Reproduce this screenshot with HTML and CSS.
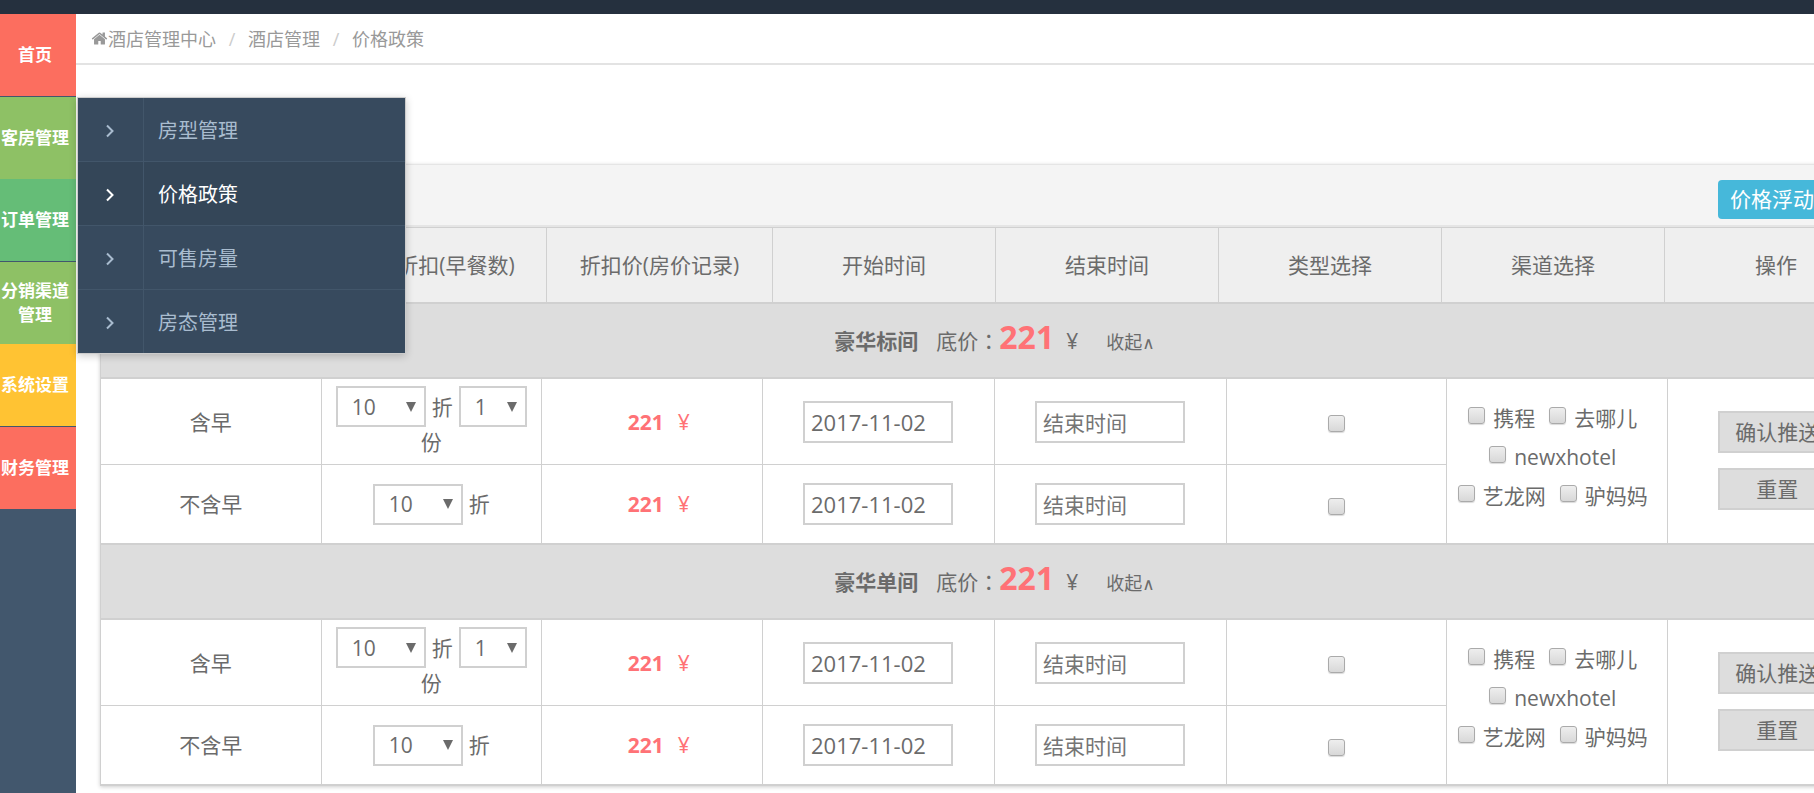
FILE: index.html
```html
<!DOCTYPE html>
<html lang="zh">
<head>
    <meta charset="UTF-8">
    <meta name="viewport" content="width=device-width, initial-scale=1.0">
    <title>价格政策</title>
    <link rel="stylesheet" href="styles.css">
</head>
<body>
    <div class="topbar"></div>
    <div class="layout">
        <!-- 左侧导航 -->
        <nav class="sidebar">
            <ul class="menu">
                <li class="menu-item red"><a href="#">首页</a></li>
                <li class="menu-item green">
                    <a href="#">客房管理</a>
                    <!-- 二级菜单 -->
                    <ul class="submenu">
                        <li><a href="#"><span class="arrow"><svg width="8" height="14" viewBox="0 0 8 14"><path d="M1 1.5l5.5 5.5L1 12.5"/></svg></span><span class="label">房型管理</span></a></li>
                        <li class="active"><a href="#"><span class="arrow"><svg width="8" height="14" viewBox="0 0 8 14"><path d="M1 1.5l5.5 5.5L1 12.5"/></svg></span><span class="label">价格政策</span></a></li>
                        <li><a href="#"><span class="arrow"><svg width="8" height="14" viewBox="0 0 8 14"><path d="M1 1.5l5.5 5.5L1 12.5"/></svg></span><span class="label">可售房量</span></a></li>
                        <li><a href="#"><span class="arrow"><svg width="8" height="14" viewBox="0 0 8 14"><path d="M1 1.5l5.5 5.5L1 12.5"/></svg></span><span class="label">房态管理</span></a></li>
                    </ul>
                </li>
                <li class="menu-item teal"><a href="#">订单管理</a></li>
                <li class="menu-item green"><a href="#">分销渠道管理</a></li>
                <li class="menu-item yellow"><a href="#">系统设置</a></li>
                <li class="menu-item red"><a href="#">财务管理</a></li>
            </ul>
        </nav>

        <main class="main">
            <!-- 面包屑 -->
            <div class="breadcrumb">
                <svg class="home" width="17" height="17" viewBox="0 0 1792 1792"><path d="M1472 992v480q0 26-19 45t-45 19h-384v-384h-256v384h-384q-26 0-45-19t-19-45v-480q0-1 .5-3t.5-3l575-474 575 474q1 2 1 6zm223-69l-62 74q-8 9-21 11h-3q-13 0-21-7l-692-577-692 577q-12 8-24 7-13-2-21-11l-62-74q-8-10-7-23.5t11-21.5l719-599q32-26 76-26t76 26l244 204v-195q0-14 9-23t23-9h192q14 0 23 9t9 23v408l219 182q10 8 11 21.5t-7 23.5z"/></svg>
                <a href="#">酒店管理中心</a>
                <span class="sep">/</span>
                <a href="#">酒店管理</a>
                <span class="sep">/</span>
                <a href="#">价格政策</a>
            </div>

            <div class="panel">
                <div class="toolbar">
                    <button type="button" class="btn-info">价格浮动</button>
                </div>

                <table class="head-table">
                    <thead>
                        <tr>
                            <th></th>
                            <th>价格折扣(早餐数)</th>
                            <th class="wide">折扣价(房价记录)</th>
                            <th>开始时间</th>
                            <th>结束时间</th>
                            <th>类型选择</th>
                            <th>渠道选择</th>
                            <th>操作</th>
                        </tr>
                    </thead>
                </table>

                <table class="price-table">
                    <colgroup>
                        <col>
                        <col>
                        <col>
                        <col class="col-date">
                        <col class="col-date">
                        <col>
                        <col>
                        <col>
                    </colgroup>
                    <tbody>
                        <tr class="group">
                            <th colspan="8"><div class="group-title"><b>豪华标间</b><span class="base" lang="zh-Hant">底价：</span><strong>221</strong><span class="yen">¥</span><a href="#">收起<i>∧</i></a></div></th>
                        </tr>
                        <tr class="row-first">
                            <td>含早</td>
                            <td>
                                <div class="discount">
                                    <select aria-label="折扣"><option>10</option></select>
                                    <span>折</span>
                                    <select class="small" aria-label="早餐份数"><option>1</option></select>
                                    <span>份</span>
                                </div>
                            </td>
                            <td class="price"><b>221</b>¥</td>
                            <td><input type="text" class="date" aria-label="开始时间" value="2017-11-02"></td>
                            <td><input type="text" class="date" aria-label="结束时间" placeholder="结束时间"></td>
                            <td><input type="checkbox" aria-label="类型选择"></td>
                            <td rowspan="2" class="last">
                                <div class="channels">
                                    <label><input type="checkbox">携程</label>
                                    <label><input type="checkbox">去哪儿</label>
                                    <label><input type="checkbox">newxhotel</label>
                                    <label><input type="checkbox">艺龙网</label>
                                    <label><input type="checkbox">驴妈妈</label>
                                </div>
                            </td>
                            <td rowspan="2" class="last">
                                <div class="actions">
                                    <button type="button">确认推送</button>
                                    <button type="button">重置</button>
                                </div>
                            </td>
                        </tr>
                        <tr class="row-last">
                            <td>不含早</td>
                            <td>
                                <div class="discount">
                                    <select aria-label="折扣"><option>10</option></select>
                                    <span>折</span>
                                </div>
                            </td>
                            <td class="price"><b>221</b>¥</td>
                            <td><input type="text" class="date" aria-label="开始时间" value="2017-11-02"></td>
                            <td><input type="text" class="date" aria-label="结束时间" placeholder="结束时间"></td>
                            <td><input type="checkbox" aria-label="类型选择"></td>
                        </tr>
                    </tbody>
                    <tbody>
                        <tr class="group">
                            <th colspan="8"><div class="group-title"><b>豪华单间</b><span class="base" lang="zh-Hant">底价：</span><strong>221</strong><span class="yen">¥</span><a href="#">收起<i>∧</i></a></div></th>
                        </tr>
                        <tr class="row-first">
                            <td>含早</td>
                            <td>
                                <div class="discount">
                                    <select aria-label="折扣"><option>10</option></select>
                                    <span>折</span>
                                    <select class="small" aria-label="早餐份数"><option>1</option></select>
                                    <span>份</span>
                                </div>
                            </td>
                            <td class="price"><b>221</b>¥</td>
                            <td><input type="text" class="date" aria-label="开始时间" value="2017-11-02"></td>
                            <td><input type="text" class="date" aria-label="结束时间" placeholder="结束时间"></td>
                            <td><input type="checkbox" aria-label="类型选择"></td>
                            <td rowspan="2" class="last">
                                <div class="channels">
                                    <label><input type="checkbox">携程</label>
                                    <label><input type="checkbox">去哪儿</label>
                                    <label><input type="checkbox">newxhotel</label>
                                    <label><input type="checkbox">艺龙网</label>
                                    <label><input type="checkbox">驴妈妈</label>
                                </div>
                            </td>
                            <td rowspan="2" class="last">
                                <div class="actions">
                                    <button type="button">确认推送</button>
                                    <button type="button">重置</button>
                                </div>
                            </td>
                        </tr>
                        <tr class="row-last">
                            <td>不含早</td>
                            <td>
                                <div class="discount">
                                    <select aria-label="折扣"><option>10</option></select>
                                    <span>折</span>
                                </div>
                            </td>
                            <td class="price"><b>221</b>¥</td>
                            <td><input type="text" class="date" aria-label="开始时间" value="2017-11-02"></td>
                            <td><input type="text" class="date" aria-label="结束时间" placeholder="结束时间"></td>
                            <td><input type="checkbox" aria-label="类型选择"></td>
                        </tr>
                    </tbody>
                </table>
            </div>
        </main>
    </div>
</body>
</html>
```

FILE: styles.css
```css
* {
    box-sizing: border-box;
}
body {
    margin: 0;
    font-family: "Open Sans", "Noto Sans CJK SC", sans-serif;
    font-size: 21px;
    line-height: 30px;
    color: #6b6b6b;
    background-color: #fff;
    overflow-x: hidden;
}
a {
    color: inherit;
    text-decoration: none;
}
ul {
    list-style: none;
    margin: 0;
    padding: 0;
}
button, input, select {
    font: inherit;
    color: inherit;
    margin: 0;
}
.topbar {
    height: 14px;
    background-color: #25303e;
}
.layout {
    display: flex;
    min-height: calc(100vh - 14px);
}

/* 左侧导航 */
.sidebar {
    flex: none;
    width: 76px;
    background-color: #42576d;
}
.menu-item {
    position: relative;
}
.menu-item:nth-child(odd) {
    border-bottom: 1px solid #42576d;
}
.menu-item > a {
    display: flex;
    align-items: center;
    justify-content: center;
    height: 82px;
    padding-right: 6px;
    font-size: 17px;
    font-weight: bold;
    line-height: 24px;
    text-align: center;
    color: #fff;
}
.red {
    background-color: #fc6e5f;
}
.green {
    background-color: #8ec165;
}
.teal {
    background-color: #65bd77;
}
.yellow {
    background-color: #ffc333;
}

/* 二级菜单 */
.submenu {
    position: absolute;
    top: 0;
    left: 77px;
    z-index: 10;
    width: 329px;
    border: 1px solid #ccc;
    background-color: #374a5e;
    box-shadow: 0 2px 8px rgba(0, 0, 0, 0.2);
}
.submenu a {
    display: flex;
    height: 63px;
    font-size: 20px;
    color: #a9bccf;
}
.submenu li + li {
    border-top: 1px solid #42566a;
}
.submenu .arrow {
    display: flex;
    align-items: center;
    justify-content: center;
    width: 66px;
    padding: 2px 2px 0 0;
    border-right: 1px solid #42566a;
}
.submenu .label {
    display: flex;
    align-items: center;
    padding: 2px 0 0 14px;
}
.submenu svg {
    fill: none;
    stroke: currentColor;
    stroke-width: 2;
}
.submenu .active {
    background-color: #344658;
}
.submenu .active a {
    color: #fff;
}

/* 内容区域 */
.main {
    flex: 1;
    min-width: 0;
}
.breadcrumb {
    display: flex;
    align-items: center;
    height: 51px;
    padding-left: 15px;
    border-bottom: 2px solid #e3e3e3;
    font-size: 18px;
    color: #999;
}
.breadcrumb .home {
    fill: #999;
}
.breadcrumb .sep {
    width: 32px;
    text-align: center;
    color: #ccc;
}
.panel {
    min-width: 1788px;
    margin: 99px 0 8px 24px;
    border-left: 1px solid #d0d0d0;
    box-shadow: 0 1px 4px rgba(0, 0, 0, 0.2);
}
.toolbar {
    display: flex;
    align-items: center;
    justify-content: flex-end;
    height: 63px;
    padding: 8px 62px 0 0;
    border-top: 1px solid #e5e5e5;
    border-bottom: 2px solid #e5e5e5;
    background-color: #f4f4f4;
}
.btn-info {
    height: 39px;
    padding: 0 12px;
    border: none;
    border-radius: 4px;
    background-color: #46b8da;
    color: #fff;
}

table {
    width: 100%;
    table-layout: fixed;
    border-collapse: separate;
    border-spacing: 0;
}
th, td {
    padding: 0;
    text-align: center;
    vertical-align: middle;
    font-weight: normal;
}
.head-table th {
    height: 77px;
    border-top: 1px solid #d0d0d0;
    border-right: 1px solid #d0d0d0;
    border-bottom: 2px solid #d0d0d0;
    background-color: #efefef;
}
.head-table .wide {
    width: 226px;
}
.price-table .col-date {
    width: 232px;
}
.group th {
    height: 75px;
    border-bottom: 2px solid #d0d0d0;
    background-color: #ddd;
}
.group-title {
    display: flex;
    align-items: baseline;
    justify-content: center;
    padding-bottom: 2px;
}
.group-title b {
    margin-right: 18px;
}
.group-title .base {
    font-family: "Noto Sans CJK TC", sans-serif;
}
.group-title strong {
    font-size: 32px;
    color: #ff7276;
}
.group-title .yen {
    margin: 0 28px 0 12px;
}
.group-title a {
    font-size: 18px;
}
.group-title i {
    font-family: "DejaVu Sans", sans-serif;
    font-size: 17px;
    font-style: normal;
}
.price-table td {
    border-right: 1px solid #d0d0d0;
    border-bottom: 1px solid #d0d0d0;
}
.row-first td {
    height: 86px;
}
.row-last td {
    height: 80px;
    border-bottom-width: 2px;
}
.price-table .last {
    border-bottom-width: 2px;
}
.discount {
    display: flex;
    flex-wrap: wrap;
    align-items: center;
    justify-content: center;
    column-gap: 6px;
    padding: 0 8px;
}
select {
    appearance: none;
    width: 90px;
    height: 41px;
    padding: 0 14px;
    border: 2px solid #d0d0d0;
    border-radius: 0;
    background: #fff url("data:image/svg+xml,%3Csvg xmlns='http://www.w3.org/2000/svg' width='10' height='10'%3E%3Cpath d='M0 0h10L5 10z' fill='%236b6b6b'/%3E%3C/svg%3E") no-repeat right 8px center;
}
select.small {
    width: 68px;
}
.price-table .price {
    padding-left: 14px;
    color: #ff7276;
}
.price b {
    margin-right: 14px;
}
.date {
    width: 150px;
    height: 42px;
    padding: 0 6px;
    border: 2px solid #d0d0d0;
    background-color: #fff;
    font-size: 22px;
    vertical-align: middle;
}
.date::placeholder {
    font-size: 21px;
    color: #757575;
    opacity: 1;
}
input[type="checkbox"] {
    appearance: none;
    width: 17px;
    height: 17px;
    border: 1px solid #aaa;
    border-radius: 3px;
    background-image: linear-gradient(#eee, #d8d8d8);
    box-shadow: 0 1px 1px rgba(0, 0, 0, 0.15);
    vertical-align: middle;
}
.channels {
    display: flex;
    flex-wrap: wrap;
    justify-content: center;
    column-gap: 14px;
    padding: 0 14px 8px 6px;
}
.channels label {
    display: flex;
    align-items: center;
    gap: 8px;
    height: 39px;
}
.channels input {
    margin-bottom: 6px;
}
.actions {
    display: flex;
    flex-direction: column;
    align-items: center;
    gap: 15px;
    padding-bottom: 2px;
}
.actions button {
    width: 118px;
    height: 42px;
    padding: 0;
    border: 2px solid #d0d0d0;
    background-color: #ddd;
}
```
